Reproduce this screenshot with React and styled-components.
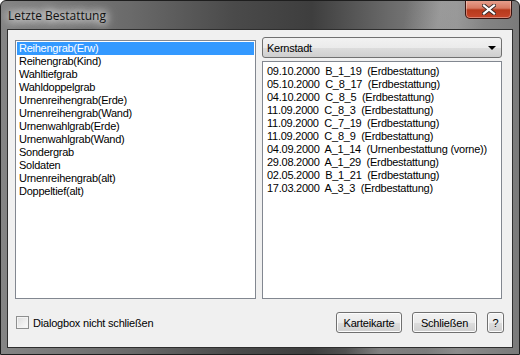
import React from "react";
import styled, { createGlobalStyle } from "styled-components";

const Global = createGlobalStyle`
  html, body { margin: 0; padding: 0; background: #fff; }
  body { width: 520px; height: 355px; overflow: hidden; }
`;

const Window = styled.div`
  width: 520px;
  height: 355px;
  box-sizing: border-box;
  display: flex;
  flex-direction: column;
  border: 1px solid #1e1e1e;
  border-radius: 6px 6px 0 0;
  background:
    linear-gradient(100deg, rgba(255,255,255,0) 0%, rgba(255,255,255,0) 70%, rgba(255,255,255,0.18) 76%, rgba(255,255,255,0) 84%),
    linear-gradient(90deg, #858585 0%, #6a6a6a 25%, #4a4a4a 45%, #3e3e3e 60%, #6a6a6a 75%, #8c8c8c 88%, #7a7a7a 100%);
  overflow: hidden;
  font-family: "Liberation Sans", Arial, sans-serif;
`;

const TitleBar = styled.div`
  height: 28px;
  flex: none;
  display: flex;
  align-items: flex-start;
  justify-content: space-between;
  position: relative;
`;

const Title = styled.div`
  font-family: "Open Sans", "Noto Sans", sans-serif;
  font-size: 12px;
  color: #111;
  padding: 6px 0 0 7px;
  text-shadow: 0 0 8px #fff, 0 0 10px #fff, 0 0 14px rgba(255,255,255,0.9);
`;

const CloseButton = styled.div`
  width: 47px;
  height: 19px;
  margin-right: 7px;
  margin-top: -1px;
  box-sizing: border-box;
  border: 1px solid #3a1410;
  border-top: none;
  border-radius: 0 0 5px 5px;
  background: linear-gradient(180deg, #e8a391 0%, #d77a62 45%, #b73a1c 55%, #c7452a 100%);
  box-shadow: inset 0 0 0 1px rgba(255,255,255,0.35);
  display: flex;
  align-items: center;
  justify-content: center;
`;

const Frame = styled.div`
  flex: 1;
  display: flex;
  padding: 0 6px 6px 6px;
`;

const Client = styled.div`
  flex: 1;
  box-sizing: border-box;
  border: 1px solid #2e2e2e;
  background: #f0f0f0;
  display: flex;
  flex-direction: column;
  padding: 7px 8px 10px 7px;
  color: #000;
`;

const Columns = styled.div`
  display: flex;
  gap: 6px;
  height: 262px;
`;

const LeftList = styled.div`
  width: 241px;
  margin-top: 3px;
  box-sizing: border-box;
  border: 1px solid #828790;
  background: #fff;
  padding: 1px;
`;

const RightCol = styled.div`
  width: 240px;
  display: flex;
  flex-direction: column;
  gap: 3px;
`;

const Combo = styled.div`
  height: 21px;
  box-sizing: border-box;
  border: 1px solid #707070;
  border-radius: 3px;
  background: linear-gradient(180deg, #f2f2f2 0%, #ebebeb 50%, #dddddd 51%, #cfcfcf 100%);
  display: flex;
  align-items: center;
  justify-content: space-between;
  padding: 0 5px 0 4px;
  font-size: 11px;
  letter-spacing: -0.25px;
`;

const Arrow = styled.div`
  width: 0;
  height: 0;
  border-left: 4px solid transparent;
  border-right: 4px solid transparent;
  border-top: 4px solid #000;
  margin-top: 1px;
`;

const RightList = styled.div`
  flex: 1;
  box-sizing: border-box;
  border: 1px solid #828790;
  background: #fff;
  padding: 3px 1px;
`;

const Item = styled.div`
  height: 13px;
  line-height: 13px;
  font-size: 11px;
  letter-spacing: -0.25px;
  white-space: pre;
  padding-left: ${p => p.$indent || 2}px;
  background: ${p => (p.$selected ? "#3399ff" : "transparent")};
  color: ${p => (p.$selected ? "#fff" : "#000")};
`;

const Bottom = styled.div`
  margin-top: 13px;
  display: flex;
  align-items: center;
  justify-content: space-between;
`;

const CheckLabel = styled.label`
  display: flex;
  align-items: center;
  gap: 4px;
  font-size: 11px;
  letter-spacing: -0.2px;
  margin-left: 1px;
`;

const Box = styled.span`
  width: 13px;
  height: 13px;
  box-sizing: border-box;
  border: 1px solid #8e8f8f;
  background: linear-gradient(135deg, #dcdcdc 0%, #f0f0f0 60%, #fbfbfb 100%);
  box-shadow: inset 0 0 0 1px #f4f4f4;
`;

const Buttons = styled.div`
  display: flex;
  gap: 10px;
`;

const Button = styled.div`
  width: ${p => p.$w}px;
  height: 21px;
  box-sizing: border-box;
  border: 1px solid #707070;
  border-radius: 3px;
  background: linear-gradient(180deg, #f2f2f2 0%, #ebebeb 50%, #dddddd 51%, #cfcfcf 100%);
  box-shadow: inset 0 0 0 1px #fcfcfc;
  display: flex;
  align-items: center;
  justify-content: center;
  font-size: 11px;
  letter-spacing: -0.2px;
`;

const leftItems = [
  "Reihengrab(Erw)",
  "Reihengrab(Kind)",
  "Wahltiefgrab",
  "Wahldoppelgrab",
  "Urnenreihengrab(Erde)",
  "Urnenreihengrab(Wand)",
  "Urnenwahlgrab(Erde)",
  "Urnenwahlgrab(Wand)",
  "Sondergrab",
  "Soldaten",
  "Urnenreihengrab(alt)",
  "Doppeltief(alt)",
];

const rightItems = [
  "09.10.2000  B_1_19  (Erdbestattung)",
  "05.10.2000  C_8_17  (Erdbestattung)",
  "04.10.2000  C_8_5  (Erdbestattung)",
  "11.09.2000  C_8_3  (Erdbestattung)",
  "11.09.2000  C_7_19  (Erdbestattung)",
  "11.09.2000  C_8_9  (Erdbestattung)",
  "04.09.2000  A_1_14  (Urnenbestattung (vorne))",
  "29.08.2000  A_1_29  (Erdbestattung)",
  "02.05.2000  B_1_21  (Erdbestattung)",
  "17.03.2000  A_3_3  (Erdbestattung)",
];

export default function App() {
  return (
    <>
      <Global />
      <Window>
        <TitleBar>
          <Title>Letzte Bestattung</Title>
          <CloseButton>
            <svg width="14" height="11" viewBox="0 0 14 11">
              <path d="M2 1.5 L12 9.5 M12 1.5 L2 9.5" stroke="#3a2a28" strokeWidth="4" strokeLinecap="square" />
              <path d="M2 1.5 L12 9.5 M12 1.5 L2 9.5" stroke="#ffffff" strokeWidth="2.2" strokeLinecap="square" />
            </svg>
          </CloseButton>
        </TitleBar>
        <Frame>
          <Client>
            <Columns>
              <LeftList>
                {leftItems.map((t, i) => (
                  <Item key={t} $selected={i === 0}>{t}</Item>
                ))}
              </LeftList>
              <RightCol>
                <Combo>
                  <span>Kernstadt</span>
                  <Arrow />
                </Combo>
                <RightList>
                  {rightItems.map(t => (
                    <Item key={t} $indent={3}>{t}</Item>
                  ))}
                </RightList>
              </RightCol>
            </Columns>
            <Bottom>
              <CheckLabel>
                <Box />
                <span>Dialogbox nicht schließen</span>
              </CheckLabel>
              <Buttons>
                <Button $w={66}>Karteikarte</Button>
                <Button $w={65}>Schließen</Button>
                <Button $w={17}>?</Button>
              </Buttons>
            </Bottom>
          </Client>
        </Frame>
      </Window>
    </>
  );
}
